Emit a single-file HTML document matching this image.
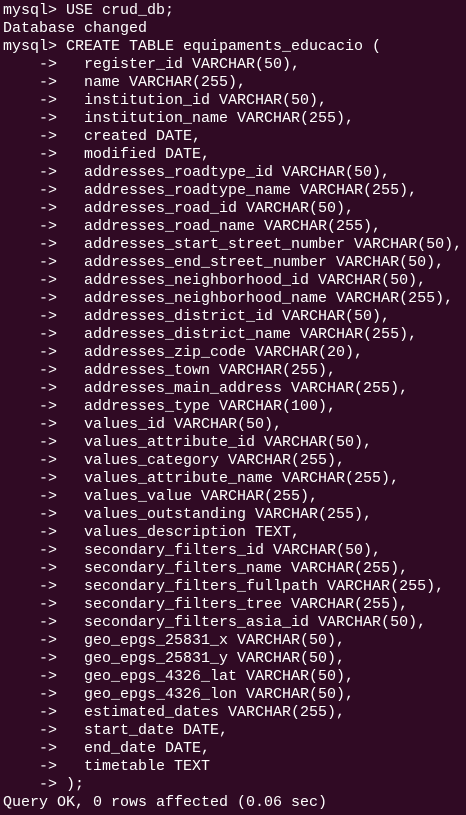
<!DOCTYPE html>
<html><head><meta charset="utf-8"><style>
html,body{margin:0;padding:0;background:#300a24;width:466px;height:815px;overflow:hidden}
pre{margin:0;padding:2px 0 0 3px;font-family:"Liberation Mono","DejaVu Sans Mono",monospace;font-size:15px;line-height:18px;color:#ffffff;white-space:pre}
</style></head><body><pre>mysql&gt; USE crud_db;
Database changed
mysql&gt; CREATE TABLE equipaments_educacio (
    -&gt;   register_id VARCHAR(50),
    -&gt;   name VARCHAR(255),
    -&gt;   institution_id VARCHAR(50),
    -&gt;   institution_name VARCHAR(255),
    -&gt;   created DATE,
    -&gt;   modified DATE,
    -&gt;   addresses_roadtype_id VARCHAR(50),
    -&gt;   addresses_roadtype_name VARCHAR(255),
    -&gt;   addresses_road_id VARCHAR(50),
    -&gt;   addresses_road_name VARCHAR(255),
    -&gt;   addresses_start_street_number VARCHAR(50),
    -&gt;   addresses_end_street_number VARCHAR(50),
    -&gt;   addresses_neighborhood_id VARCHAR(50),
    -&gt;   addresses_neighborhood_name VARCHAR(255),
    -&gt;   addresses_district_id VARCHAR(50),
    -&gt;   addresses_district_name VARCHAR(255),
    -&gt;   addresses_zip_code VARCHAR(20),
    -&gt;   addresses_town VARCHAR(255),
    -&gt;   addresses_main_address VARCHAR(255),
    -&gt;   addresses_type VARCHAR(100),
    -&gt;   values_id VARCHAR(50),
    -&gt;   values_attribute_id VARCHAR(50),
    -&gt;   values_category VARCHAR(255),
    -&gt;   values_attribute_name VARCHAR(255),
    -&gt;   values_value VARCHAR(255),
    -&gt;   values_outstanding VARCHAR(255),
    -&gt;   values_description TEXT,
    -&gt;   secondary_filters_id VARCHAR(50),
    -&gt;   secondary_filters_name VARCHAR(255),
    -&gt;   secondary_filters_fullpath VARCHAR(255),
    -&gt;   secondary_filters_tree VARCHAR(255),
    -&gt;   secondary_filters_asia_id VARCHAR(50),
    -&gt;   geo_epgs_25831_x VARCHAR(50),
    -&gt;   geo_epgs_25831_y VARCHAR(50),
    -&gt;   geo_epgs_4326_lat VARCHAR(50),
    -&gt;   geo_epgs_4326_lon VARCHAR(50),
    -&gt;   estimated_dates VARCHAR(255),
    -&gt;   start_date DATE,
    -&gt;   end_date DATE,
    -&gt;   timetable TEXT
    -&gt; );
Query OK, 0 rows affected (0.06 sec)
</pre></body></html>
